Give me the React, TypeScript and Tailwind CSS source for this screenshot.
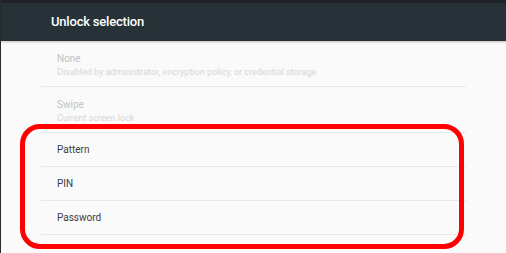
import React from 'react';

const disabledItems = [
  { title: 'None', subtitle: 'Disabled by administrator, encryption policy, or credential storage' },
  { title: 'Swipe', subtitle: 'Current screen lock' },
];

const options = ['Pattern', 'PIN', 'Password'];

export default function App() {
  return (
    <div className="relative w-[506px] h-[253px] overflow-hidden bg-[#fafafa] border-l border-[#2a2a2a] font-['Roboto',sans-serif]">
      {/* ─── Header ─── */}
      <div className="h-[41px] bg-[#263238] border-t-[3px] border-[#1d2327] shadow-[0_1px_2px_rgba(0,0,0,0.25)] flex items-center pl-[50px]">
        <span className="text-[13px] font-medium text-white tracking-[-0.2px]">Unlock selection</span>
      </div>

      {/* ─── List ─── */}
      <div className="ml-[40px] w-[425px]">
        {disabledItems.map((item) => (
          <div key={item.title} className="h-[46px] border-b border-[#e8e8e8] flex flex-col justify-center pl-[16px] pt-[2px]">
            <span className="text-[10px] leading-[14px] text-[#c2c2c2]">{item.title}</span>
            <span className="text-[9px] leading-[12px] text-[#d6d6d6]">{item.subtitle}</span>
          </div>
        ))}
        {options.map((opt) => (
          <div key={opt} className="h-[34px] border-b border-[#e8e8e8] flex items-center pl-[16px]">
            <span className="text-[10px] text-[#3c3c3c]">{opt}</span>
          </div>
        ))}
      </div>

      {/* ─── Annotation ─── */}
      <div className="absolute left-[19px] top-[124px] w-[444px] h-[125px] rounded-[20px] border-[5px] border-[#ff0000]" />
    </div>
  );
}
